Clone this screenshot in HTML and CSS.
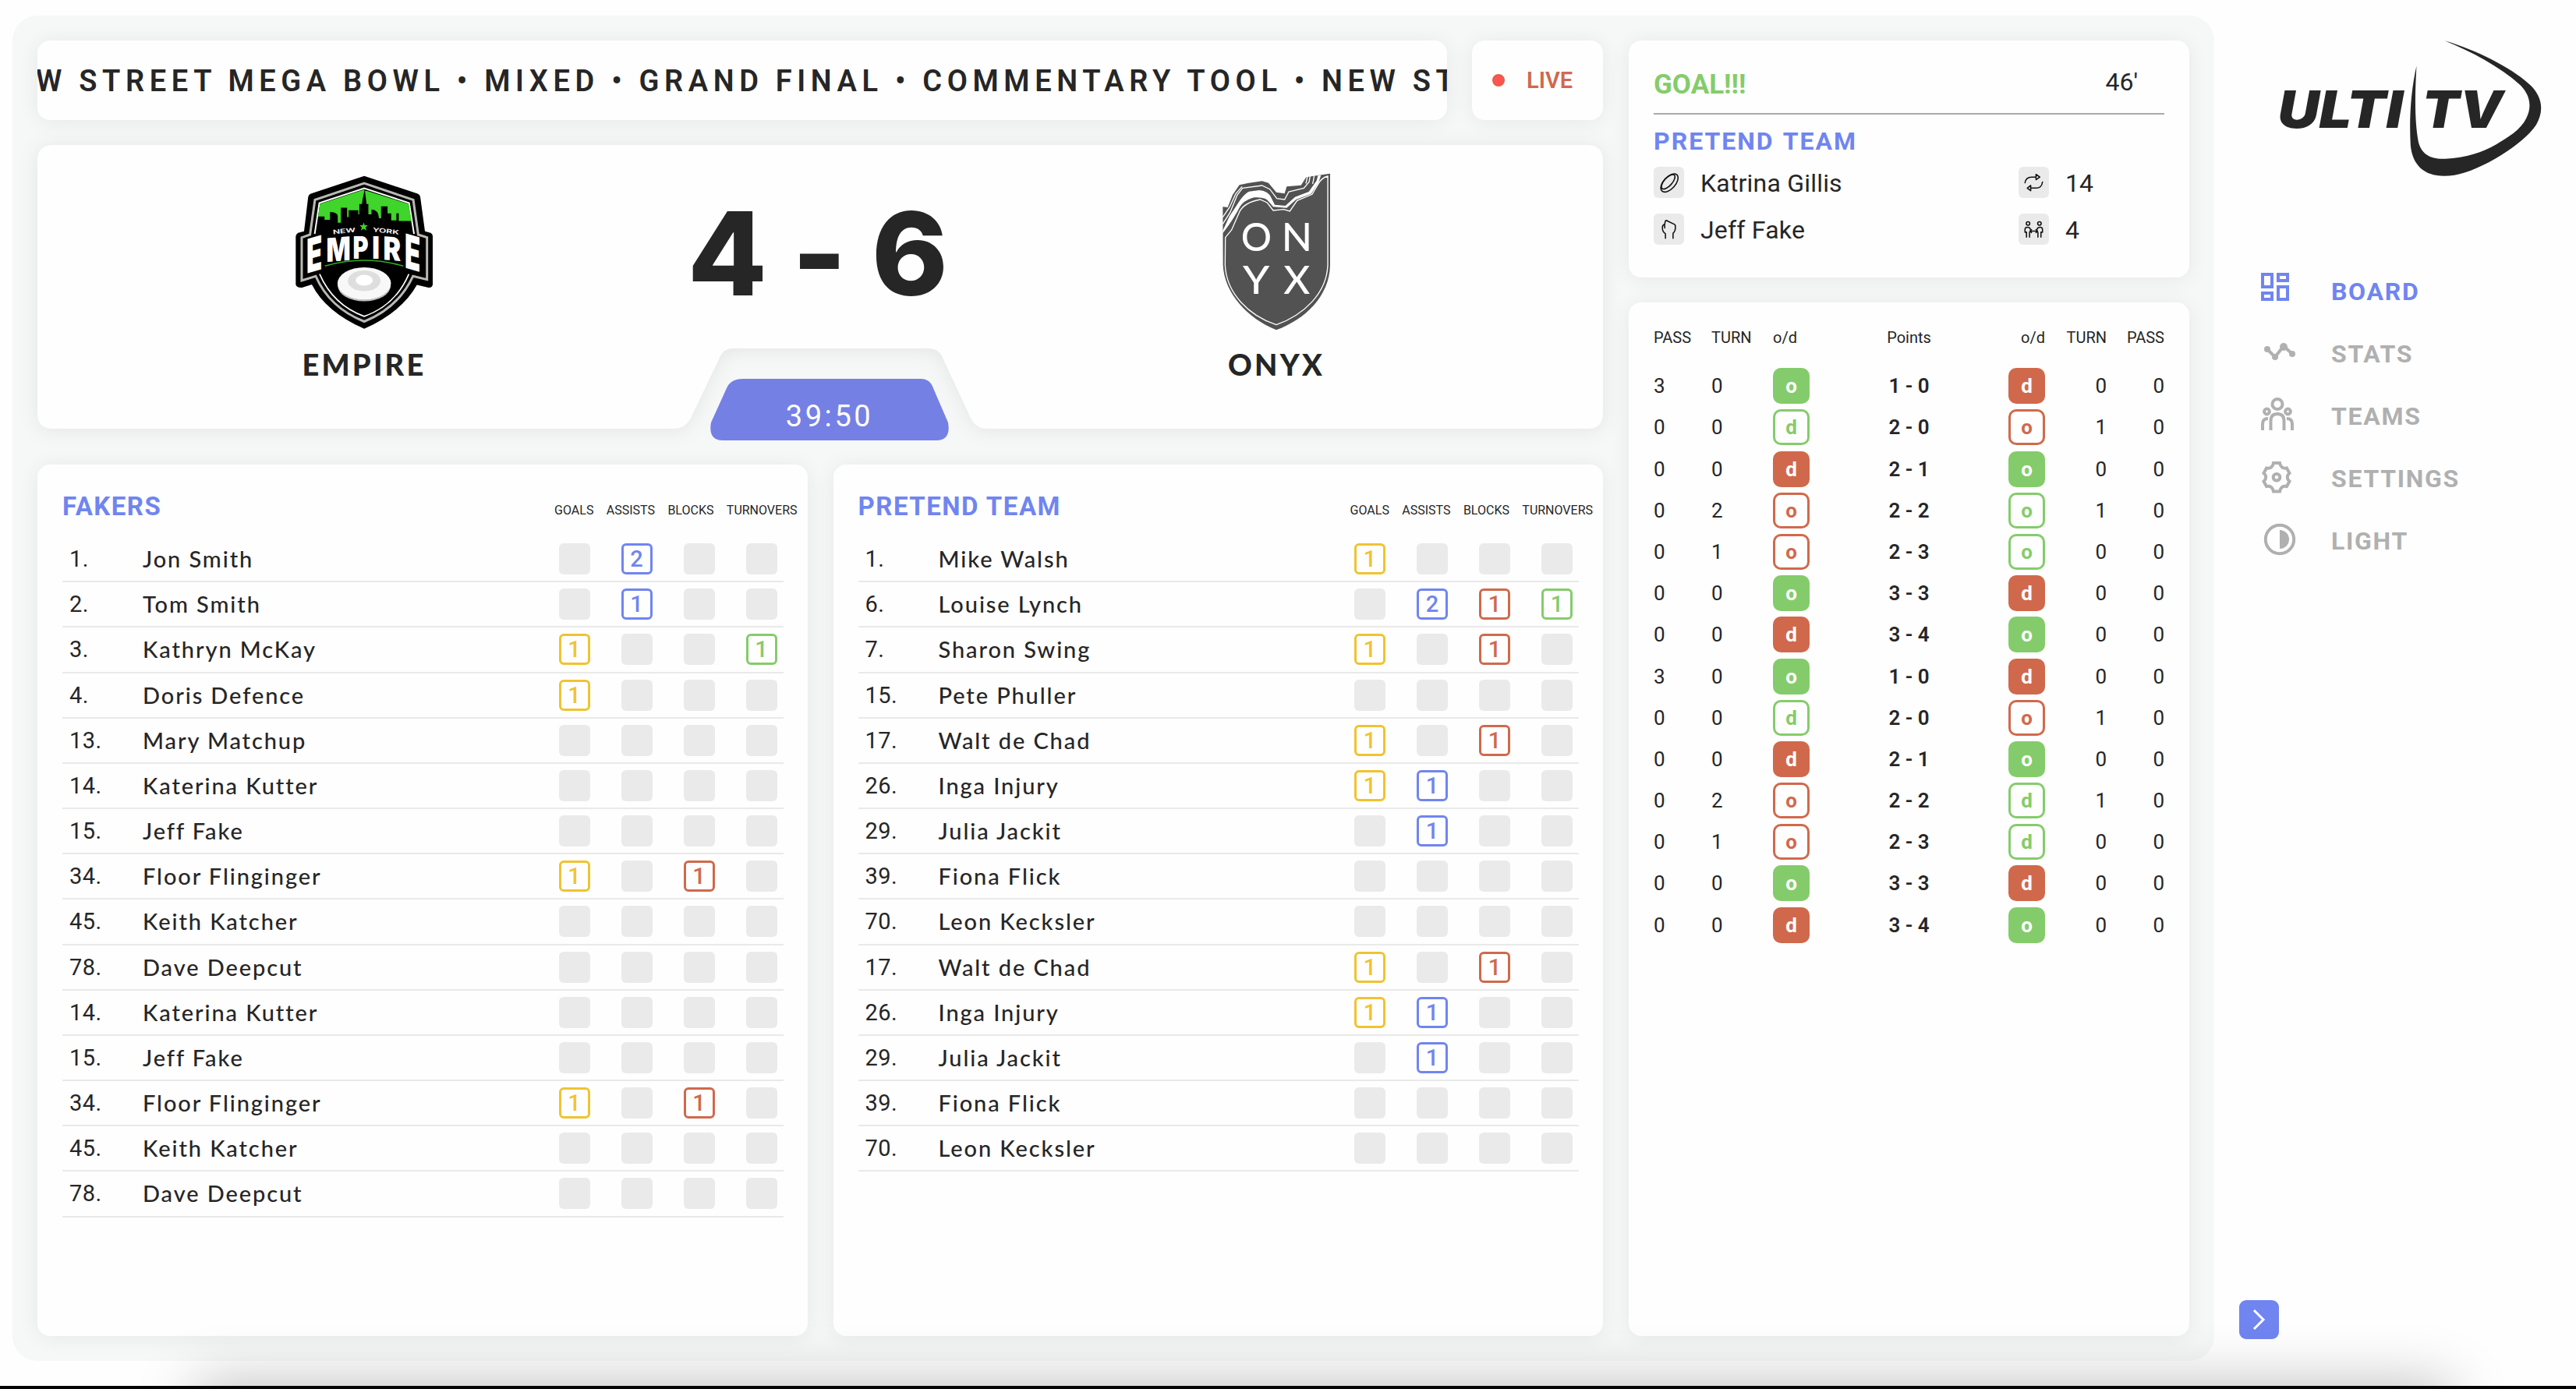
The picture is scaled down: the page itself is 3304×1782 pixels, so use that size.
FILE: index.html
```html
<!DOCTYPE html>
<html lang="en">
<head>
<meta charset="utf-8">
<title>Ulti TV</title>
<link rel="stylesheet" href="styles.css">
</head>
<body>
<div class="app">
  <main class="stage">
    <div class="left">
      <div class="topline">
        <div class="card ticker"><div class="ticker-text">W STREET MEGA BOWL • MIXED • GRAND FINAL • COMMENTARY TOOL • NEW ST</div></div>
        <div class="card live"><span class="dot"></span><span>LIVE</span></div>
      </div>
      <section class="score">
        <svg class="score-bg" viewBox="0 0 2008 364"><path fill="#fefefe" d="M20 0H1988Q2008 0 2008 20V344Q2008 364 1988 364H1218Q1202 364 1195 346L1162 275Q1157 261 1143 261H892Q879 261 874 275L840 346Q833 364 815 364H20Q0 364 0 344V20Q0 0 20 0Z"/></svg>
        <div class="club">
          <svg class="crest empire" viewBox="50 60 550 615">
            <path d="M324 77L530 145Q538 148 540 157L558 290L580 296Q588 300 588 309V495Q586 508 572 507L527 497Q470 600 324 666Q175 600 122 495L84 507Q63 508 60 495V309Q62 300 69 296L92 290L108 157Q110 148 118 145Z"/>
            <path fill="none" stroke="#b9b9b4" stroke-width="9" d="M324 105L513 169L532 303L566 314V476L512 463Q455 585 324 638Q190 585 137 463L83 480V314L115 303L134 169Z"/>
            <path fill="none" stroke="#fff" stroke-width="6" d="M133 300L151 181L324 124L497 181L516 300"/>
            <path fill="none" stroke="#fff" stroke-width="5" d="M152 455Q205 575 324 618Q445 575 496 455"/>
            <path fill="#3fd52a" d="M153 185L321 130L495 185L507 250H457V221H448V248H428V221H414V194H389V240H381Q378 206 352 206V225H340V185H333L326 128L318 165L315 185H305V225H301V209H264V235H258V199H234V257H222V230Q218 216 192 216V246H171V233H146Z"/>
            <path fill="#3fd52a" d="M322 256l4 11h12l-9 8 4 12-11-7-11 7 4-12-9-8h12z"/>
            <text class="crest-small" x="203" y="297" textLength="87" lengthAdjust="spacingAndGlyphs" transform="rotate(-6 246 290)">NEW</text>
            <text class="crest-small" x="356" y="297" textLength="102" lengthAdjust="spacingAndGlyphs" transform="rotate(6 407 290)">YORK</text>
            <g class="crest-big">
              <text transform="translate(101 453) skewY(-16) scale(.72 1.32)" font-size="138">E</text>
              <text transform="translate(178 409) skewY(-5) scale(.78 1)" font-size="126">M</text>
              <text transform="translate(280 396) scale(.78 1)" font-size="118">P</text>
              <text transform="translate(354 395) scale(.85 1)" font-size="118">I</text>
              <text transform="translate(397 399) skewY(5) scale(.82 1)" font-size="124">R</text>
              <text transform="translate(480 430) skewY(16) scale(.72 1.32)" font-size="138">E</text>
            </g>
            <path fill="none" stroke="#2fae20" stroke-width="5" d="M172 424Q324 380 474 424"/>
            <ellipse cx="324" cy="500" rx="102" ry="60" fill="#bdbdbd"/><ellipse cx="324" cy="491" rx="103" ry="62" fill="#f8f8f8"/>
            <ellipse cx="324" cy="481" rx="63" ry="40" fill="#dedede"/><ellipse cx="324" cy="479" rx="33" ry="21" fill="#fff"/>
          </svg>
          <div class="club-name">EMPIRE</div>
        </div>
        <div class="result"><span>4</span><span class="dash">-</span><span>6</span></div>
        <div class="club">
          <svg class="crest onyx" viewBox="80 60 420 615">
            <path fill="#525252" d="M84 196L103 198L122 150L148 112L180 105L235 97L260 104L290 140L322 145L330 118L385 113L405 82L450 75L497 68V420C495 540 400 630 290 670C180 625 90 530 85 420Z"/>
            <path fill="none" stroke="#fff" stroke-width="4" d="M93 420C98 530 185 615 290 650C395 612 484 530 488 420V78Q462 85 450 110L428 148L370 172L342 213L318 206L278 210L255 180L228 168Q170 178 150 212L118 285L94 314Z"/>
            <path fill="#fff" d="M84 288L110 232Q130 202 148 174Q165 148 185 137L225 132Q260 136 270 160L284 188L325 192L362 158L415 138L445 95L450 76L462 74L452 104L424 146L366 168L330 200L278 196L256 170Q240 158 205 160Q165 170 150 196Q125 245 84 298Z"/>
            <path fill="none" stroke="#fff" stroke-width="4" d="M84 262L112 218L140 150L160 124L235 114L265 128L292 164L322 168L338 138L396 124L416 100L420 78M84 236L110 198L134 146L158 118M404 106L410 78M430 108L436 76"/>
            <g class="onyx-letters"><text x="154" y="365" textLength="118" lengthAdjust="spacingAndGlyphs">O</text><text x="310" y="365" textLength="118" lengthAdjust="spacingAndGlyphs">N</text><text x="161" y="532" textLength="103" lengthAdjust="spacingAndGlyphs">Y</text><text x="318" y="532" textLength="102" lengthAdjust="spacingAndGlyphs">X</text></g>
          </svg>
          <div class="club-name">ONYX</div>
        </div>
        <div class="clock">
          <svg viewBox="0 0 306 79"><path fill="#7580e5" d="M42 0H270Q282 0 286 12L305 56Q309 79 290 79H16Q-3 79 1 56L21 12Q26 0 42 0Z"/></svg>
          <span>39:50</span>
        </div>
      </section>
      <div class="teams">
        <section class="card team"><header><h2>FAKERS</h2><div class="cols"><span>GOALS</span><span>ASSISTS</span><span>BLOCKS</span><span>TURNOVERS</span></div></header><div id="fakers"></div></section>
        <section class="card team"><header><h2>PRETEND TEAM</h2><div class="cols"><span>GOALS</span><span>ASSISTS</span><span>BLOCKS</span><span>TURNOVERS</span></div></header><div id="pretend"></div></section>
      </div>
    </div>
    <div class="right">
      <section class="card goal">
        <div class="goal-head"><strong>GOAL!!!</strong><span>46'</span></div>
        <h3>PRETEND TEAM</h3>
        <div class="facts">
          <i class="tile"><svg viewBox="0 0 40 40"><g transform="rotate(-48 20 20)"><ellipse cx="20" cy="21" rx="14.5" ry="7.8"/><ellipse cx="20" cy="18.8" rx="12" ry="5.2"/></g></svg></i><span class="who">Katrina Gillis</span>
          <i class="tile"><svg viewBox="0 0 40 40"><path d="M8.500 20.500Q9.500 13 17 13H23M23 9.500V16.500L28 13ZM31.500 19.500Q30.500 27.500 23 27.500H16M16 24V31L11.500 27.500Z"/></svg></i><span>14</span>
          <i class="tile"><svg viewBox="0 0 40 40"><path d="M15.500 32V26Q11 23 11.500 17Q12 14 14.500 13.500V18.500M14.500 13.500L15.500 9Q17 8 18.500 9.500L27 13.500Q29 14.500 28.500 17Q29 22 25.500 25.500V32"/></svg></i><span class="who">Jeff Fake</span>
          <i class="tile"><svg viewBox="0 0 40 40"><circle cx="12.500" cy="12.500" r="2.300"/><circle cx="27.500" cy="12.500" r="2.300"/><path d="M15.500 20Q15 17.500 11.500 17.500Q8.500 17.500 8.500 20.500V24H10.500V30.500M14.500 24V30.500M24.500 20Q25 17.500 28.500 17.500Q31.500 17.500 31.500 20.500V24H29.500V30.500M25.500 24V30.500M15 22.500H25M17 20.500L15 22.500L17 24.500M23 20.500L25 22.500L23 24.500"/></svg></i><span>4</span>
        </div>
      </section>
      <section class="card points">
        <div class="prow phead"><span>PASS</span><span>TURN</span><span>o/d</span><span class="mid">Points</span><span>o/d</span><span>TURN</span><span>PASS</span></div>
        <div id="points"></div>
      </section>
    </div>
  </main>
  <aside class="side">
    <svg class="logo" viewBox="60 20 1030 550">
      <path fill="#262626" d="M708 36C830 72 960 138 1030 200C1085 247 1092 305 1060 360C1010 435 850 535 745 554C640 570 585 525 576 440C570 330 578 225 599 133C592 250 592 350 606 425C618 475 655 494 710 491C790 486 855 466 905 436C950 410 1000 380 1022 335C1045 290 1036 245 1000 208C920 135 810 78 708 36Z"/>
      <text x="64" y="373" textLength="482" lengthAdjust="spacingAndGlyphs">ULTI</text>
      <text x="620" y="373" textLength="312" lengthAdjust="spacingAndGlyphs">TV</text>
    </svg>
    <nav>
      <a class="on"><svg viewBox="0 0 46 46"><path d="M2 2h12v16h-12zM22 2h12v8h-12zM22 18h12v16h-12zM2 26h12v8h-12z"/></svg><span>BOARD</span></a>
      <a><svg viewBox="0 0 46 46"><g transform="translate(0 4)"><path d="M8 14L18 24L29 10L40 20"/><g class="f"><circle cx="8" cy="14" r="4"/><circle cx="18" cy="24" r="4"/><circle cx="29" cy="11" r="5"/><circle cx="40" cy="20" r="4"/></g></g></svg><span>STATS</span></a>
      <a><svg viewBox="0 0 46 46"><circle cx="21" cy="8.500" r="6.500"/><circle cx="7.500" cy="18" r="3.400"/><circle cx="34.500" cy="18" r="3.400"/><path d="M12.500 42V30Q12.500 21 21 21Q29.500 21 29.500 30V42M2 42V34Q2 27 9 27M40 42V34Q40 27 33 27"/></svg><span>TEAMS</span></a>
      <a><svg viewBox="0 0 46 46"><g transform="translate(0 2)"><path d="M16 2H24Q25.500 10 33 8.500L36.500 15Q31 20 36.500 25.500L33 32Q25.500 30.500 24 38.500H16Q14.500 30.500 7 32L3.500 25.500Q9 20 3.500 15L7 8.500Q14.500 10 16 2Z"/><circle cx="20" cy="20.200" r="4.300"/></g></svg><span>SETTINGS</span></a>
      <a><svg viewBox="0 0 46 46"><circle cx="24" cy="22" r="18.200"/><path class="f" d="M24 10A12 12 0 0 1 24 34Z"/></svg><span>LIGHT</span></a>
    </nav>
    <button class="toggle"><svg viewBox="0 0 51 50"><path d="M19 13L31 25L19 37"/></svg></button>
  </aside>
  <div class="window-shadow"></div>
  <div class="window-edge"></div>
</div>
<script src="script.js"></script>
</body>
</html>
```

FILE: styles.css
```css
*{box-sizing:border-box}
body{margin:0;background:#fefefe;color:#262626;font-family:Roboto,"Liberation Sans",sans-serif;overflow:hidden}
h2,h3{margin:0}
.app{position:relative;display:flex;width:3304px;height:1782px;overflow:hidden}
.stage{display:flex;gap:33px;width:2824px;height:1726px;margin:20px 0 0 16px;padding:32px;border-radius:32px;background:#f6f7f7}
.left{display:flex;flex-direction:column;width:2008px}
.right{display:flex;flex-direction:column;gap:32px;width:719px}
.card{background:#fefefe;border-radius:16px;box-shadow:0 2px 28px rgba(0,0,0,.065)}
.topline{display:flex;gap:32px;height:102px}
.ticker{width:1808px;overflow:hidden;line-height:104px;white-space:nowrap}
.ticker-text{margin-left:-2px;font-size:38px;font-weight:600;letter-spacing:6.6px;word-spacing:-.8px}
.live{display:flex;align-items:center;width:168px;padding-left:26px;gap:28px;font-size:29px;font-weight:600;color:#d0694c}
.dot{width:16px;height:16px;border-radius:50%;background:#ff5450;border:2px solid #e05f4c}
.score{position:relative;display:grid;grid-template-columns:838px 332px 838px;height:364px;margin-top:32px}
.score-bg{position:absolute;inset:0;width:2008px;height:364px;overflow:visible;filter:drop-shadow(0 2px 13px rgba(0,0,0,.075))}
.club{position:relative;display:flex;flex-direction:column;align-items:center;padding-top:34px}
.crest{height:205px}
.empire{width:183px}.onyx{width:140px}
.crest-small{font:600 23px Inter,sans-serif;fill:#fff}
.crest-big{font-family:Inter,sans-serif;font-weight:900;fill:#fff}
.onyx-letters{font:500 152px Lato,sans-serif;fill:#fff}
.club-name{margin-top:19px;font:900 38px/46px Lato,sans-serif;letter-spacing:3.2px}
.result{position:relative;display:flex;justify-content:space-between;font:800 148px/150px Inter,sans-serif;padding-top:65px;margin:0 2px 0 -4px}
.clock{position:absolute;left:863px;top:300px;width:306px;height:79px}
.clock svg{position:absolute;inset:0;width:306px;height:79px}
.clock span{position:relative;display:block;text-align:center;font-size:38px;line-height:97px;letter-spacing:3.6px;color:#fff}
.teams{display:flex;gap:33px;height:1118px;margin-top:46px}
.team{width:988px;padding:32px 31px 0 32px}
.team header{display:flex;justify-content:space-between;height:61px}
h2{font-size:33px;line-height:43px;letter-spacing:1.5px;color:#7085f0;font-weight:700}
.cols{display:flex;gap:16.4px;font-size:16px;line-height:54px;margin-right:-18px;white-space:nowrap}
.player{display:flex;align-items:center;height:58.18px;padding:0 8px 0 9px;border-bottom:2px solid #e9e9e9}
.num{width:94px;font-size:29px;letter-spacing:.4px}
.name{flex:1;font:500 29px/34px Lato,sans-serif;letter-spacing:1.9px}
.stats{display:flex;gap:40px}
.stat{width:40px;height:40px;border-radius:6px;background:#eaeaea;font-size:29px;line-height:34px;font-weight:500;text-align:center}
.stat.set{background:none;border:3px solid}
.s0{color:#f0c330}.s1{color:#7085f0}.s2{color:#d0694c}.s3{color:#84cc6b}
.goal{height:304px;padding:32px;font-size:32px}
.goal-head{display:flex;justify-content:space-between;height:63px;padding-right:34px;border-bottom:2px solid #aaa}
.goal-head strong{font-size:35px;line-height:50px;color:#84cc6b}
.goal-head span{line-height:43px}
h3{font-size:32px;line-height:38px;margin:15px 0 4px;color:#7085f0;letter-spacing:2px;word-spacing:2px}
.facts{display:grid;grid-template-columns:60px 408px 60px auto;grid-auto-rows:60px;align-items:center;margin-top:3px}
.facts span{padding-top:1px}
.who{letter-spacing:.2px}
.tile{width:39px;height:40px;border-radius:6px;background:#eaeaea;display:flex}
.tile svg{width:39px;height:40px;fill:none;stroke:#111;stroke-width:1.6;stroke-linejoin:round;stroke-linecap:round}
.points{flex:1;padding:29px 32px}
.prow{display:grid;grid-template-columns:74px 79px 100px 149px 100px 79px 74px;align-items:center;height:53.2px;font-size:26px}
.prow>:nth-child(n+5){justify-self:end}
.prow .mid{justify-self:center;font-weight:600}
.prow.phead{height:32px;margin-bottom:19.6px;font-size:20px}
.prow.phead .mid{font-weight:400}
.od{width:47px;height:46px;border-radius:10px;border:3px solid;text-align:center;line-height:41px;font-weight:700}
.g{color:#84cc6b}.r{color:#d0694c}
.fill.g{background:#84cc6b;border-color:#84cc6b}.fill.r{background:#d0694c;border-color:#d0694c}
.fill.g,.fill.r{color:#fff}
.side{display:flex;flex-direction:column;align-items:flex-start;width:464px;padding:47px 0 64px 32px}
.logo{width:343px;height:183px;margin-left:48px}
.logo text{font:italic 900 200px Inter,sans-serif;fill:#262626}
nav{display:flex;flex-direction:column;gap:34px;margin:120px 0 0 28px}
nav a{display:flex;align-items:center;gap:44px;height:46px;font-size:32px;font-weight:700;letter-spacing:1.7px;color:#b0b0b0}
nav svg{width:46px;height:46px;fill:none;stroke:currentColor;stroke-width:4}
nav .f{fill:currentColor;stroke:none}
nav span{padding-top:2px}
nav .on{color:#7085f0}
.toggle{margin-top:auto;width:51px;height:50px;padding:0;border:0;border-radius:9px;background:#7085f0}
.toggle svg{display:block;width:51px;height:50px;fill:none;stroke:#fff;stroke-width:3}
.window-shadow{position:absolute;left:265px;right:175px;top:1790px;height:60px;box-shadow:0 0 75px 14px rgba(0,0,0,.26)}
.window-edge{position:absolute;left:0;right:0;bottom:0;height:4px;background:#070404}
```

FILE: script.js
```js
const fakers = [["1.","Jon Smith","0200"],["2.","Tom Smith","0100"],["3.","Kathryn McKay","1001"],["4.","Doris Defence","1000"],["13.","Mary Matchup","0000"],["14.","Katerina Kutter","0000"],["15.","Jeff Fake","0000"],["34.","Floor Flinginger","1010"],["45.","Keith Katcher","0000"],["78.","Dave Deepcut","0000"],["14.","Katerina Kutter","0000"],["15.","Jeff Fake","0000"],["34.","Floor Flinginger","1010"],["45.","Keith Katcher","0000"],["78.","Dave Deepcut","0000"]];
const pretend = [["1.","Mike Walsh","1000"],["6.","Louise Lynch","0211"],["7.","Sharon Swing","1010"],["15.","Pete Phuller","0000"],["17.","Walt de Chad","1010"],["26.","Inga Injury","1100"],["29.","Julia Jackit","0100"],["39.","Fiona Flick","0000"],["70.","Leon Kecksler","0000"],["17.","Walt de Chad","1010"],["26.","Inga Injury","1100"],["29.","Julia Jackit","0100"],["39.","Fiona Flick","0000"],["70.","Leon Kecksler","0000"]];
// pass, turn, badge, score, badge, turn, pass; an upper-case badge is filled
const points = [
  "3 0 gO 1-0 rD 0 0","0 0 gd 2-0 ro 1 0","0 0 rD 2-1 gO 0 0","0 2 ro 2-2 go 1 0","0 1 ro 2-3 go 0 0","0 0 gO 3-3 rD 0 0","0 0 rD 3-4 gO 0 0",
  "3 0 gO 1-0 rD 0 0","0 0 gd 2-0 ro 1 0","0 0 rD 2-1 gO 0 0","0 2 ro 2-2 gd 1 0","0 1 ro 2-3 gd 0 0","0 0 gO 3-3 rD 0 0","0 0 rD 3-4 gO 0 0"];
const players = list => list.map(([n, name, s]) => `<div class="player"><span class="num">${n}</span><span class="name">${name}</span><div class="stats">${[...s].map((v, i) => v === "0" ? '<span class="stat"></span>' : `<span class="stat set s${i}">${v}</span>`).join("")}</div></div>`).join("");
const badge = b => `<span class="od ${b[0]}${b[1] < "a" ? " fill" : ""}">${b[1].toLowerCase()}</span>`;
document.getElementById("fakers").innerHTML = players(fakers);
document.getElementById("pretend").innerHTML = players(pretend);
document.getElementById("points").innerHTML = points.map(p => {
  const c = p.split(" ");
  return `<div class="prow"><span>${c[0]}</span><span>${c[1]}</span>${badge(c[2])}<span class="mid">${c[3].replace("-", " - ")}</span>${badge(c[4])}<span>${c[5]}</span><span>${c[6]}</span></div>`;
}).join("");
```
